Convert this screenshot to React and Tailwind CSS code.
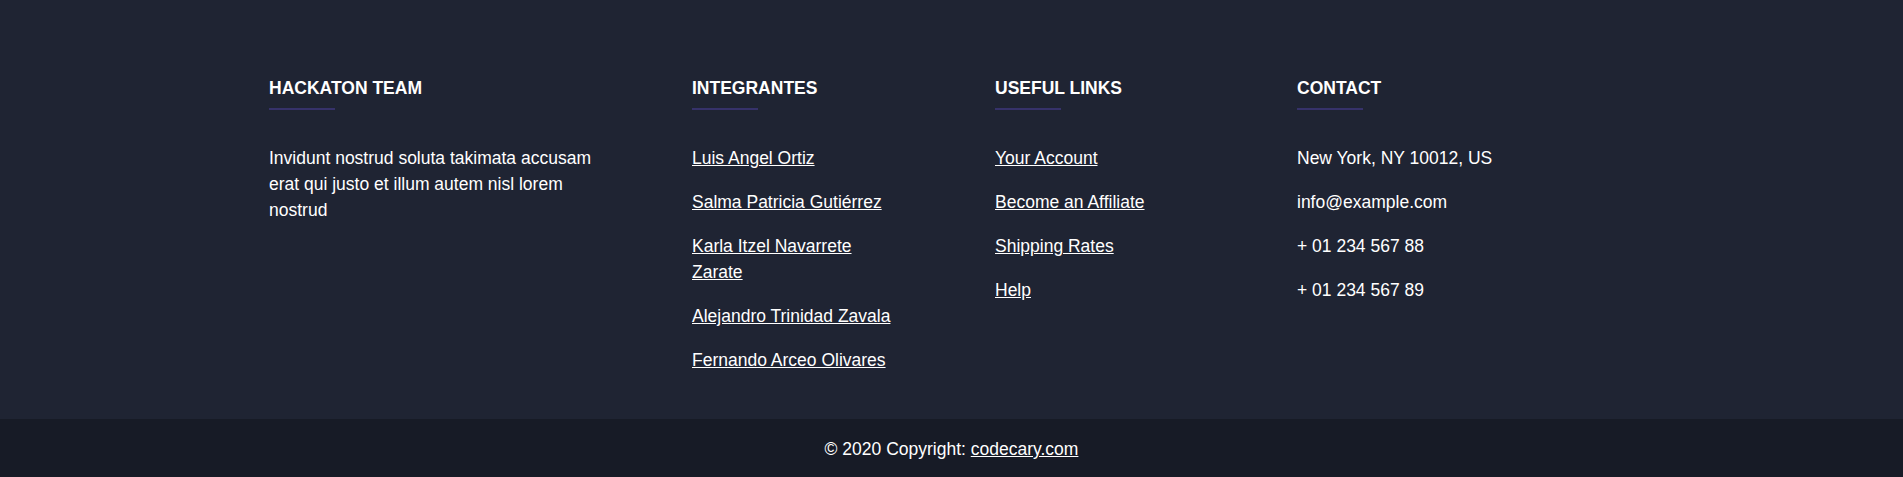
import React from 'react';

const members = [
    'Luis Angel Ortiz',
    'Salma Patricia Gutiérrez',
    'Karla Itzel Navarrete Zarate',
    'Alejandro Trinidad Zavala',
    'Fernando Arceo Olivares',
];

const usefulLinks = ['Your Account', 'Become an Affiliate', 'Shipping Rates', 'Help'];

const contact = ['New York, NY 10012, US', 'info@example.com', '+ 01 234 567 88', '+ 01 234 567 89'];

const ColumnTitle = ({ children }) => (
    <div>
        <h6 className="text-[17.5px] leading-[21px] font-bold uppercase text-white">{children}</h6>
        {/* Accent rule under each heading */}
        <div className="mt-[9px] h-[2px] w-[66px] bg-[#36326a]" />
    </div>
);

const App = () => {
    return (
        <footer className="min-h-screen flex flex-col w-full text-white font-['Liberation_Sans',Arial,sans-serif] text-[17.5px] leading-[26px]">
            <div className="flex-1 bg-[#1f2433] pt-[78px] pb-[46px] pl-[269px]">
                <div className="grid grid-cols-[423px_303px_302px_1fr]">
                    {/* Team */}
                    <div>
                        <ColumnTitle>Hackaton Team</ColumnTitle>
                        <p className="mt-[35px] w-[340px]">
                            Invidunt nostrud soluta takimata accusam erat qui justo et illum autem nisl lorem nostrud
                        </p>
                    </div>

                    {/* Members */}
                    <div>
                        <ColumnTitle>Integrantes</ColumnTitle>
                        <ul className="mt-[35px] w-[207px] flex flex-col gap-[18px]">
                            {members.map((name) => (
                                <li key={name}>
                                    <a href="#" className="underline">{name}</a>
                                </li>
                            ))}
                        </ul>
                    </div>

                    {/* Links */}
                    <div>
                        <ColumnTitle>Useful links</ColumnTitle>
                        <ul className="mt-[35px] flex flex-col gap-[18px]">
                            {usefulLinks.map((link) => (
                                <li key={link}>
                                    <a href="#" className="underline">{link}</a>
                                </li>
                            ))}
                        </ul>
                    </div>

                    {/* Contact */}
                    <div>
                        <ColumnTitle>Contact</ColumnTitle>
                        <ul className="mt-[35px] flex flex-col gap-[18px]">
                            {contact.map((item) => (
                                <li key={item}>{item}</li>
                            ))}
                        </ul>
                    </div>
                </div>
            </div>

            <div className="bg-[#171b26] pt-[17px] pb-[16px] text-center">
                © 2020 Copyright: <a href="#" className="underline">codecary.com</a>
            </div>
        </footer>
    );
};

export default App;
